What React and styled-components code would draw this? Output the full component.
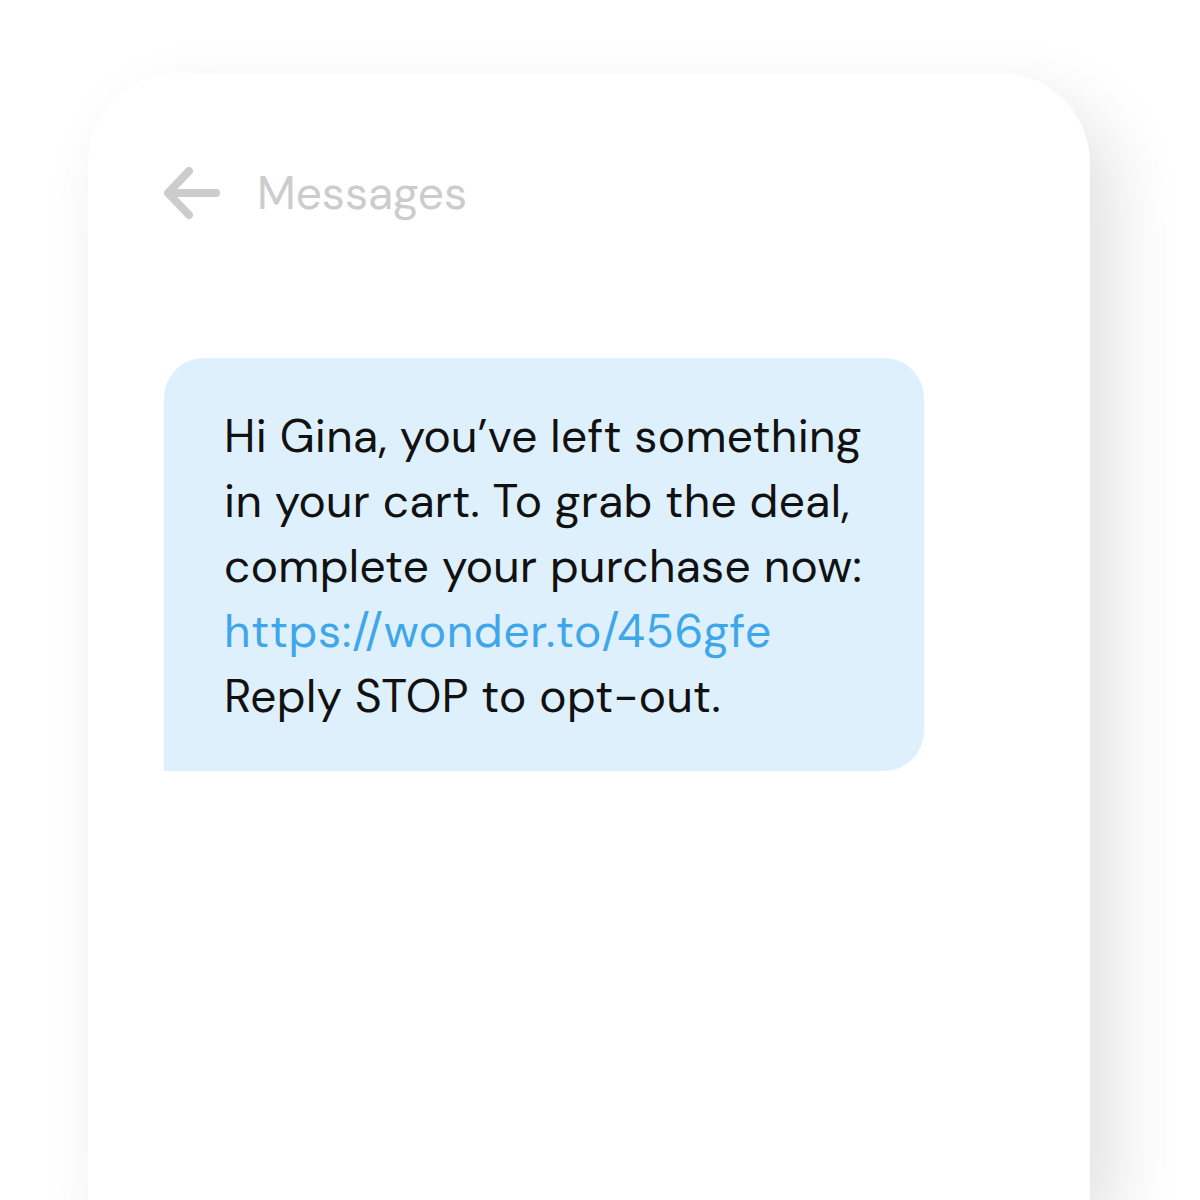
import React from "react";
import styled, { createGlobalStyle } from "styled-components";

const Global = createGlobalStyle`
    html, body {
        margin: 0;
        padding: 0;
        background: #fff;
        font-family: "DM Sans", Inter, "Noto Sans", sans-serif;
    }
    body {
        width: 1200px;
        height: 1200px;
        overflow: hidden;
    }
`;

const Page = styled.div`
    padding: 73px 0 0 88px;
`;

const Phone = styled.div`
    width: 1002px;
    height: 1127px;
    background: #fff;
    border-radius: 90px 90px 0 0;
    box-shadow: 24px 30px 70px rgba(0, 0, 0, 0.12);
    padding-top: 95px;
    box-sizing: border-box;
`;

const Header = styled.div`
    display: flex;
    align-items: center;
    gap: 36px;
    padding-left: 75px;
    height: 50px;
`;

const Title = styled.span`
    font-size: 46px;
    color: #cccccc;
`;

const Bubble = styled.div`
    margin: 140px 0 0 76px;
    width: 760px;
    box-sizing: border-box;
    background: #dff0fd;
    border-radius: 40px 40px 40px 0;
    padding: 46px 30px 42px 60px;
    font-size: 46px;
    line-height: 65px;
    letter-spacing: 0.35px;
    color: #111;
    white-space: nowrap;
`;

const Link = styled.span`
    color: #3ea6ea;
    letter-spacing: 0.7px;
`;

const BackArrow = () => (
    <svg width="58" height="54" viewBox="0 0 58 54" fill="none">
        <path
            d="M53 27H6M26 5L5 27l21 22"
            stroke="#cccccc"
            strokeWidth="8"
            strokeLinecap="round"
            strokeLinejoin="round"
        />
    </svg>
);

const App = () => (
    <Page>
        <Global />
        <Phone>
            <Header>
                <BackArrow />
                <Title>Messages</Title>
            </Header>
            <Bubble>
                Hi Gina, you’ve left something<br />
                in your cart. To grab the deal,<br />
                complete your purchase now:<br />
                <Link>https://wonder.to/456gfe</Link><br />
                Reply STOP to opt-out.
            </Bubble>
        </Phone>
    </Page>
);

export default App;
